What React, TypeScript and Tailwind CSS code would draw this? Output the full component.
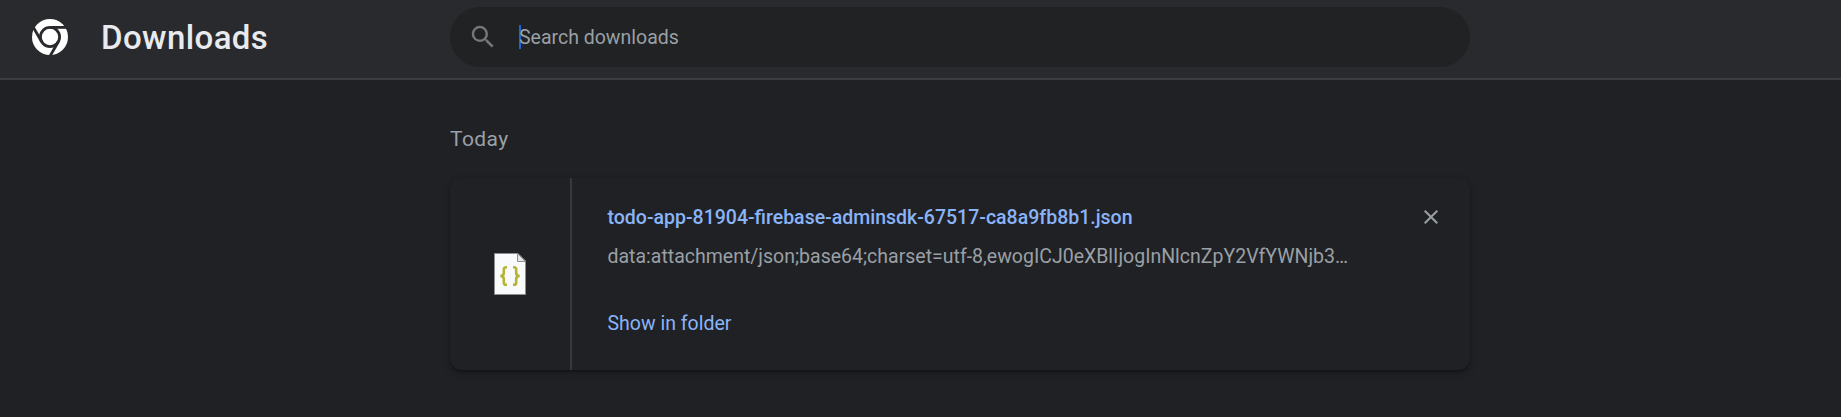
import React from "react";

function ChromeLogo() {
  return (
    <svg className="size-9 shrink-0" viewBox="-18 -18 36 36" aria-hidden="true">
      <circle r="18" fill="#fff" />
      <g fill="none" stroke="#292a2d" strokeWidth="2.8">
        <circle r="9.6" />
        <path d="M0-9.6H18" />
        <path d="M0-9.6H18" transform="rotate(120)" />
        <path d="M0-9.6H18" transform="rotate(240)" />
      </g>
    </svg>
  );
}

function SearchIcon() {
  return (
    <svg className="size-[30px] shrink-0" viewBox="0 0 24 24" fill="#74777a" aria-hidden="true">
      <path d="M15.5 14h-.79l-.28-.27A6.471 6.471 0 0 0 16 9.5 6.5 6.5 0 1 0 9.5 16c1.61 0 3.09-.59 4.23-1.57l.27.28v.79l5 4.99L20.49 19l-4.99-5zm-6 0C7.01 14 5 11.99 5 9.5S7.01 5 9.5 5 14 7.01 14 9.5 11.99 14 9.5 14z" />
    </svg>
  );
}

function JsonFileIcon() {
  return (
    <svg className="h-[42px] w-8" viewBox="0 0 32 42" aria-hidden="true">
      <path d="M.5.5H24L31.5 8V41.5H.5Z" fill="#f9fafc" stroke="#8d8d8f" />
      <path d="M23.5.5V8.5H31.5Z" fill="#e4e5e7" stroke="#8d8d8f" />
      <g fill="none" stroke="#b5b433" strokeWidth="2.6">
        <path d="M13 14.3H12Q9.8 14.3 9.8 16.6V20Q9.8 23 6.3 23Q9.8 23 9.8 26V29.4Q9.8 31.7 12 31.7H13" />
        <path d="M19 14.3H20Q22.2 14.3 22.2 16.6V20Q22.2 23 25.7 23Q22.2 23 22.2 26V29.4Q22.2 31.7 20 31.7H19" />
      </g>
    </svg>
  );
}

function Header() {
  return (
    <header className="flex h-20 border-b-2 border-[#3c3d41] bg-[#292a2d]">
      <div className="flex h-[74px] w-[450px] shrink-0 items-center pl-8">
        <ChromeLogo />
        <h1 className="mt-px ml-[33px] text-[33px] leading-none font-medium tracking-[0.4px] text-[#e8eaed]">Downloads</h1>
      </div>
      <div className="mt-[7px] flex h-[60px] w-[1020px] items-center rounded-full bg-[#202223] pl-[18px]">
        <SearchIcon />
        <div className="ml-[21px] h-6 w-0.5 bg-[#1a66d8]" />
        <span className="mt-0.5 -ml-0.5 text-[19.5px] leading-6 text-[#9aa0a6]">Search downloads</span>
      </div>
    </header>
  );
}

function DownloadCard() {
  return (
    <article className="flex h-48 w-[1020px] rounded-xl bg-[#202124] shadow-[0_1.5px_3px_rgba(0,0,0,0.3),0_3px_9px_rgba(0,0,0,0.15)]">
      <div className="flex w-[122px] shrink-0 items-center justify-center border-r-2 border-[#37383b]">
        <JsonFileIcon />
      </div>
      <div className="flex min-w-0 grow flex-col items-start pt-[25px] pl-[35.5px] text-[19.5px] leading-[30px]">
        <a className="font-medium text-[#8ab4f8]">todo-app-81904-firebase-adminsdk-67517-ca8a9fb8b1.json</a>
        <p className="mt-[9px] whitespace-nowrap text-[#9aa0a6]">
          data:attachment/json;base64;charset=utf-8,ewogICJ0eXBlIjogInNlcnZpY2VfYWNjb3…
        </p>
        <button className="mt-[37px] text-[#8ab4f8]">Show in folder</button>
      </div>
      <button className="mt-[27px] mr-[27px] size-6 shrink-0" aria-label="Remove from list">
        <svg viewBox="0 0 24 24" fill="#9aa0a6">
          <path d="M19 6.41L17.59 5 12 10.59 6.41 5 5 6.41 10.59 12 5 17.59 6.41 19 12 13.41 17.59 19 19 17.59 13.41 12z" />
        </svg>
      </button>
    </article>
  );
}

export default function App() {
  return (
    <div className="h-[417px] overflow-hidden bg-[#202124] font-[Roboto,sans-serif]">
      <Header />
      <main className="pt-11 pl-[450px]">
        <h2 className="mb-6 text-[21px] leading-[30px] tracking-[0.4px] text-[#9aa0a6]">Today</h2>
        <DownloadCard />
      </main>
    </div>
  );
}
